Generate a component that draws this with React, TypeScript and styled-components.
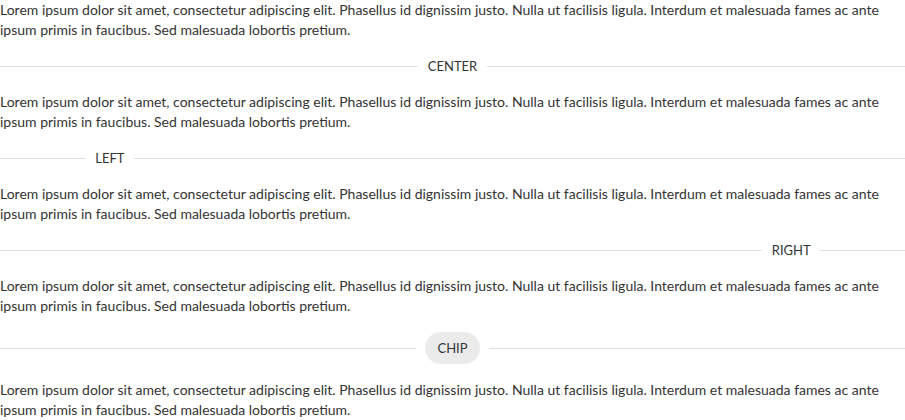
import React from "react";
import styled, { createGlobalStyle } from "styled-components";

const Global = createGlobalStyle`
  html, body { margin: 0; padding: 0; background: #fff; }
  body { font-family: "Lato", "Liberation Sans", sans-serif; color: #333; }
`;

const Page = styled.div`
  display: flex;
  flex-direction: column;
  width: 905px;
`;

const Para = styled.p`
  margin: 0;
  font-size: 14px;
  line-height: 20px;
  color: #333;
`;

type Align = "center" | "left" | "right";

const Divider = styled.div<{ $align: Align }>`
  display: flex;
  align-items: center;
  margin: 16px 0;
  white-space: nowrap;
  &::before, &::after {
    content: "";
    border-top: 1px solid #e0e0e0;
    width: ${(p) => (p.$align === "center" ? "100%" : p.$align === "left" ? "10%" : "90%")};
  }
  &::after {
    width: ${(p) => (p.$align === "center" ? "100%" : p.$align === "left" ? "90%" : "10%")};
  }
`;

const Label = styled.span`
  padding: 0 9.6px;
  font-size: 13px;
  line-height: 20px;
  color: #333;
`;

const Chip = styled.span`
  display: inline-flex;
  align-items: center;
  height: 32px;
  padding: 0 12px;
  border-radius: 16px;
  background: #ebebeb;
  font-size: 13px;
  color: #333;
`;

const text =
  "Lorem ipsum dolor sit amet, consectetur adipiscing elit. Phasellus id dignissim justo. Nulla ut facilisis ligula. Interdum et malesuada fames ac ante ipsum primis in faucibus. Sed malesuada lobortis pretium.";

export default function App() {
  return (
    <>
      <Global />
      <Page>
        <Para>{text}</Para>
        <Divider $align="center"><Label>CENTER</Label></Divider>
        <Para>{text}</Para>
        <Divider $align="left"><Label>LEFT</Label></Divider>
        <Para>{text}</Para>
        <Divider $align="right"><Label>RIGHT</Label></Divider>
        <Para>{text}</Para>
        <Divider $align="center"><Label><Chip>CHIP</Chip></Label></Divider>
        <Para>{text}</Para>
      </Page>
    </>
  );
}
